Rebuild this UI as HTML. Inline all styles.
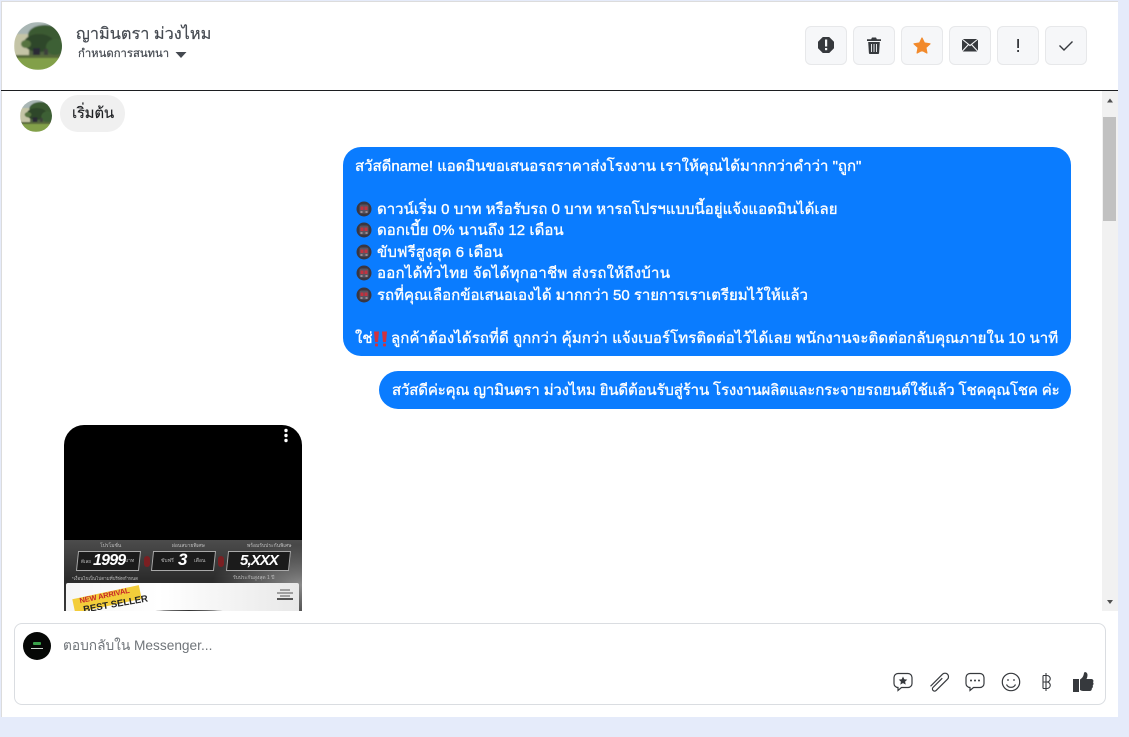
<!DOCTYPE html>
<html lang="th"><head><meta charset="utf-8"><title>Messenger</title>
<style>
*{box-sizing:border-box}
html,body{margin:0;padding:0;width:1129px;height:737px;overflow:hidden;background:#e5ebfa;font-family:"Liberation Sans","Noto Sans CJK SC",sans-serif}
.abs{position:absolute}
#panel{position:absolute;left:1px;top:1px;width:1117px;height:716px;background:#fff;border-top:1px solid #dcdcdc;border-left:1px solid #dcdcdc}
.btn{position:absolute;top:26px;width:42px;height:39px;background:#f6f7f9;border:1px solid #e7e8ea;border-radius:6px}
.btn svg{position:absolute;left:0;top:0}
.t{position:absolute;white-space:nowrap}
.line{position:absolute;left:355px;color:#fff;font-size:15px;line-height:21px;white-space:nowrap;-webkit-text-stroke:.35px #fff}
.emo{position:absolute;left:356px;width:16px;height:16px}
.s{position:absolute;white-space:nowrap;color:#bdbdbd;font-size:5px;line-height:7px}
</style></head><body>
<div id="panel"></div>

<svg width="0" height="0" style="position:absolute"><defs>
<clipPath id="c1"><circle cx="24" cy="24" r="24"/></clipPath>
<filter id="bl"><feGaussianBlur stdDeviation=".7"/></filter>
<symbol id="av" viewBox="0 0 48 48"><g clip-path="url(#c1)"><g filter="url(#bl)">
<rect width="48" height="48" fill="#4f6440"/>
<rect width="48" height="13" fill="#a9b6b4"/>
<rect x="0" y="12" width="15" height="21" fill="#c4c4a6"/>
<ellipse cx="31" cy="13" rx="17" ry="10" fill="#3a5a30"/>
<ellipse cx="25" cy="21" rx="15" ry="9" fill="#2e4729"/>
<ellipse cx="41" cy="25" rx="9" ry="8" fill="#3e6034"/>
<ellipse cx="12" cy="22" rx="5" ry="4" fill="#56733f"/>
<rect x="19" y="26" width="7" height="9" fill="#2a2c34"/>
<rect x="30" y="27" width="4" height="8" fill="#3c3f3a"/>
<rect x="0" y="36" width="48" height="12" fill="#82a04a"/>
<rect x="0" y="33" width="48" height="3" fill="#56693a"/>
</g></g></symbol>
<symbol id="tr" viewBox="0 0 16 16"><circle cx="8" cy="8" r="7.500" fill="#3a3640"/><rect x="3.500" y="3.500" width="9" height="9" rx="2" fill="#585460"/><rect x="4.500" y="5.500" width="3" height="3.500" fill="#c2323f"/><rect x="8.500" y="5.500" width="3" height="3.500" fill="#c2323f"/><rect x="4.500" y="10.500" width="2" height="1" fill="#d9c6c6"/><rect x="9.500" y="10.500" width="2" height="1" fill="#d9c6c6"/></symbol>
</defs></svg>

<svg class="abs" style="left:14px;top:22px" width="48" height="48"><use href="#av"/></svg>
<div class="t" style="left:76px;top:23px;font-size:16.300px;line-height:22px;color:#444950;-webkit-text-stroke:.2px #444950">ญามินตรา ม่วงไหม</div>
<div class="t" style="left:78px;top:46px;font-size:11.300px;line-height:16px;color:#444950;-webkit-text-stroke:.2px #444950">กำหนดการสนทนา</div>
<svg class="abs" style="left:175px;top:51px" width="12" height="8" viewBox="0 0 12 8"><path d="M.5 1h11L6 7z" fill="#444950"/></svg>
<div class="abs" style="left:1px;top:90px;width:1117px;height:1px;background:#1c1e21"></div>

<div class="btn" style="left:805px"><svg width="40" height="37" viewBox="0 0 40 37"><path d="M17 10.500h6l4.500 4.500v6L23 25.500h-6L12.500 21v-6z" fill="#36393d" stroke="#36393d" stroke-linejoin="round"/><rect x="19" y="12.500" width="2.200" height="7" fill="#f6f7f9"/><rect x="19" y="21" width="2.200" height="2.200" fill="#f6f7f9"/></svg></div>
<div class="btn" style="left:853px"><svg width="40" height="37" viewBox="0 0 40 37"><path d="M13 12.200h14v1.800H13zM17 12.500l1-2h4l1 2z" fill="#36393d"/><path d="M14.200 15h11.600l-.7 11a1 1 0 0 1-1 1h-8.200a1 1 0 0 1-1-1z" fill="#36393d"/><path d="M17.500 17v8M20 17v8M22.500 17v8" stroke="#f6f7f9" stroke-width=".9"/></svg></div>
<div class="btn" style="left:901px"><svg width="40" height="37" viewBox="0 0 40 37"><path d="M20 11l2.400 5 5.600.8-4.100 3.800 1 5.400-4.900-2.700-4.900 2.700 1-5.400-4.100-3.800 5.600-.8z" fill="#f28a2c" stroke="#f28a2c" stroke-width="1.200" stroke-linejoin="round"/></svg></div>
<div class="btn" style="left:949px"><svg width="40" height="37" viewBox="0 0 40 37"><rect x="12" y="12" width="16" height="12.500" fill="#36393d"/><path d="M12 12l8 6.500 8-6.500M12 24.500l6.300-6.800M28 24.500l-6.300-6.800" stroke="#f6f7f9" stroke-width="1.100" fill="none"/></svg></div>
<div class="btn" style="left:997px"><svg width="40" height="37" viewBox="0 0 40 37"><rect x="19.200" y="12" width="1.800" height="9" fill="#36393d"/><rect x="19.200" y="23" width="1.800" height="2" fill="#36393d"/></svg></div>
<div class="btn" style="left:1045px"><svg width="40" height="37" viewBox="0 0 40 37"><path d="M13.500 18.500l4.500 4.500 8.500-8.500" stroke="#36393d" stroke-width="1.400" fill="none"/></svg></div>

<svg class="abs" style="left:20px;top:100px" width="32" height="32"><use href="#av"/></svg>
<div class="abs" style="left:60px;top:95px;width:65px;height:37px;background:#f0f0f0;border-radius:18px"></div>
<div class="t" style="left:72px;top:103px;font-size:15px;line-height:21px;color:#1c1e21;letter-spacing:-.25px;-webkit-text-stroke:.15px #1c1e21">เริ่มต้น</div>

<div class="abs" style="left:1102px;top:91px;width:16px;height:520px;background:#f1f1f1"></div>
<div class="abs" style="left:1103px;top:117px;width:13px;height:104px;background:#c1c1c1"></div>
<svg class="abs" style="left:1102px;top:91px" width="16" height="520" viewBox="0 0 16 520"><path d="M5 11.500h6L8 7.500z" fill="#505050"/><path d="M5 509h6l-3 4z" fill="#505050"/></svg>

<div class="abs" style="left:343px;top:147px;width:728px;height:209px;background:#0a7cff;border-radius:18px"></div>
<div class="line" style="top:156px;letter-spacing:-.02px">สวัสดีname! แอดมินขอเสนอรถราคาส่งโรงงาน เราให้คุณได้มากกว่าคำว่า "ถูก"</div>
<svg class="emo" style="top:201px"><use href="#tr"/></svg>
<div class="line" style="left:377px;top:199px;letter-spacing:.01px">ดาวน์เริ่ม 0 บาท หรือรับรถ 0 บาท หารถโปรฯแบบนี้อยู่แจ้งแอดมินได้เลย</div>
<svg class="emo" style="top:222px"><use href="#tr"/></svg>
<div class="line" style="left:377px;top:220px;letter-spacing:.04px">ดอกเบี้ย 0% นานถึง 12 เดือน</div>
<svg class="emo" style="top:244px"><use href="#tr"/></svg>
<div class="line" style="left:377px;top:242px;letter-spacing:.08px">ขับฟรีสูงสุด 6 เดือน</div>
<svg class="emo" style="top:265px"><use href="#tr"/></svg>
<div class="line" style="left:377px;top:263px;letter-spacing:.25px">ออกได้ทั่วไทย จัดได้ทุกอาชีพ ส่งรถให้ถึงบ้าน</div>
<svg class="emo" style="top:287px"><use href="#tr"/></svg>
<div class="line" style="left:377px;top:285px;letter-spacing:-.02px">รถที่คุณเลือกข้อเสนอเองได้ มากกว่า 50 รายการเราเตรียมไว้ให้แล้ว</div>
<div class="line" style="top:328px">ใช่</div>
<svg class="abs" style="left:373px;top:331px" width="15" height="16" viewBox="0 0 15 16"><path d="M1 .5h5L5 11H2zM9 .5h5L13 11h-3z" fill="#d0333f"/><rect x="2" y="12.500" width="3" height="3" rx="1" fill="#d0333f"/><rect x="10" y="12.500" width="3" height="3" rx="1" fill="#d0333f"/></svg>
<div class="line" style="left:391px;top:328px;letter-spacing:.07px">ลูกค้าต้องได้รถที่ดี ถูกกว่า คุ้มกว่า แจ้งเบอร์โทรติดต่อไว้ได้เลย พนักงานจะติดต่อกลับคุณภายใน 10 นาที</div>

<div class="abs" style="left:379px;top:371px;width:692px;height:38px;background:#0a7cff;border-radius:19px"></div>
<div class="line" style="left:392px;top:380px;letter-spacing:-.16px">สวัสดีค่ะคุณ ญามินตรา ม่วงไหม ยินดีต้อนรับสู่ร้าน โรงงานผลิตและกระจายรถยนต์ใช้แล้ว โชคคุณโชค ค่ะ</div>

<div class="abs" style="left:64px;top:425px;width:238px;height:186px;background:#000;border-radius:20px 20px 0 0;overflow:hidden">
  <div class="abs" style="left:0;top:115px;width:238px;height:71px;background:radial-gradient(ellipse 90px 40px at 238px 45px,#8a8a8a,transparent),linear-gradient(180deg,#4c4c4c,#2c2c2c 55%,#3a3a3a)"></div>
  <div class="s" style="left:36px;top:118px">โปรโมชั่น</div>
  <div class="s" style="left:108px;top:118px">ผ่อนสบายพิเศษ</div>
  <div class="s" style="left:183px;top:118px">พร้อมรับประกันพิเศษ</div>
  <div class="abs" style="left:13px;top:126px;width:63px;height:20px;background:#1b1b1b;border:1px solid #a9a9a9;transform:skewX(-6deg)"></div>
  <div class="abs" style="left:88px;top:126px;width:63px;height:20px;background:#1b1b1b;border:1px solid #a9a9a9;transform:skewX(-6deg)"></div>
  <div class="abs" style="left:163px;top:126px;width:63px;height:20px;background:#1b1b1b;border:1px solid #a9a9a9;transform:skewX(-6deg)"></div>
  <div class="s" style="left:17px;top:133px;font-size:4.500px">ดีเลย</div>
  <div class="t" style="left:29px;top:126px;color:#fff;font:italic bold 16px/20px 'Liberation Sans',sans-serif;letter-spacing:-.8px">1999</div>
  <div class="s" style="left:61px;top:133px">บาท</div>
  <div class="s" style="left:97px;top:133px">ขับฟรี</div>
  <div class="t" style="left:114px;top:125px;color:#fff;font:italic bold 17px/20px 'Liberation Sans',sans-serif">3</div>
  <div class="s" style="left:130px;top:133px">เดือน</div>
  <div class="t" style="left:176px;top:126px;color:#fff;font:italic bold 15px/20px 'Liberation Sans',sans-serif;letter-spacing:-.9px">5,XXX</div>
  <div class="abs" style="left:80px;top:131px;width:6px;height:11px;background:#7a1f22;border-radius:3px"></div>
  <div class="abs" style="left:154px;top:131px;width:6px;height:11px;background:#7a1f22;border-radius:3px"></div>
  <div class="s" style="left:8px;top:150px;font-size:4.500px">*เงื่อนไขเป็นไปตามที่บริษัทกำหนด</div>
  <div class="s" style="left:169px;top:150px">รับประกันสูงสุด 1 ปี</div>
  <div class="abs" style="left:2px;top:158px;width:233px;height:30px;background:linear-gradient(90deg,#f6f6f6,#fff 40%,#e8e8e8);border-radius:2px 2px 0 0"></div>
  <div class="abs" style="left:9px;top:167px;width:68px;height:14px;background:#f3cd3a;transform:rotate(-12deg)"></div>
  <div class="t" style="left:15px;top:166px;color:#c8262a;font:bold 7.500px/9px 'Liberation Sans',sans-serif;transform:rotate(-12deg);letter-spacing:-.1px">NEW ARRIVAL</div>
  <div class="t" style="left:19px;top:174px;color:#222;font:bold 9.500px/12px 'Liberation Sans',sans-serif;transform:rotate(-10deg)">BEST SELLER</div>
  <div class="abs" style="left:80px;top:184.500px;width:90px;height:6px;background:#333;border-radius:50% 50% 0 0"></div>
  <svg class="abs" style="left:212px;top:162px" width="18" height="14" viewBox="0 0 18 14" fill="none" stroke="#555"><path d="M4 3h10M1 6h16M4 9h10"/><path d="M1 12h16" stroke="#222" stroke-width="1.500"/></svg>
  <svg class="abs" style="left:218px;top:3px" width="8" height="16" viewBox="0 0 8 16"><circle cx="4" cy="2.500" r="1.700" fill="#fff"/><circle cx="4" cy="7.500" r="1.700" fill="#fff"/><circle cx="4" cy="12.500" r="1.700" fill="#fff"/></svg>
</div>

<div class="abs" style="left:14px;top:623px;width:1092px;height:82px;background:#fff;border:1px solid #dadde1;border-radius:8px"></div>
<svg class="abs" style="left:23px;top:632px" width="28" height="28" viewBox="0 0 28 28"><circle cx="14" cy="14" r="14" fill="#060806"/><rect x="10" y="10" width="8" height="3" rx="1" fill="#3aa24a"/><rect x="8" y="16" width="12" height="1" fill="#cfd8cf"/></svg>
<div class="t" style="left:63px;top:636px;font-size:13.700px;line-height:20px;color:#70757a">ตอบกลับใน Messenger...</div>

<svg class="abs" style="left:890px;top:668px" width="210" height="30" viewBox="0 0 210 30" fill="none" stroke="#36393d" stroke-width="1.200">
<path d="M8 5.500h10a4 4 0 0 1 4 4v6a4 4 0 0 1-4 4h-6.500l-3.500 3v-3a4 4 0 0 1-4-4v-6a4 4 0 0 1 4-4z"/>
<path d="M13 8.500l1.300 2.700 3 .4-2.200 2 .6 3-2.700-1.500-2.700 1.500.6-3-2.200-2 3-.4z" fill="#36393d" stroke="none"/>
<g transform="rotate(45 49 14)"><path d="M46 23V6a3.500 3.500 0 0 1 7 0v16a2.200 2.200 0 0 1-4.400 0V9"/></g>
<path d="M80 5.500h10a4 4 0 0 1 4 4v6a4 4 0 0 1-4 4h-6.500l-3.500 3v-3a4 4 0 0 1-4-4v-6a4 4 0 0 1 4-4z"/>
<circle cx="81" cy="12.500" r="1" fill="#36393d" stroke="none"/><circle cx="85" cy="12.500" r="1" fill="#36393d" stroke="none"/><circle cx="89" cy="12.500" r="1" fill="#36393d" stroke="none"/>
<circle cx="121" cy="14" r="8.700"/><circle cx="118" cy="12" r=".9" fill="#36393d" stroke="none"/><circle cx="124" cy="12" r=".9" fill="#36393d" stroke="none"/><path d="M116.500 16.500a5 5 0 0 0 9 0"/>
<path d="M153 7.500v13M156 5v18M153 7.500h4a3 3 0 0 1 0 6.500h-4M157 14a3.200 3.200 0 0 1 0 6.500h-4" stroke-width="1.100"/>
<path d="M183 11h6v13h-6z" fill="#36393d" stroke="none"/>
<path d="M190 11.500c2.500-1.500 3.500-3.500 4-6.500 .3-1.500 3.500-1 3.500 2 0 1.500-.5 3-1 4h5c1.700 0 2.500 2 1.500 3.300 .8 1 .7 2.400-.3 3.200 .5 1.200 .1 2.300-.9 3 .2 1.500-.8 2.500-2.300 2.500h-6.500c-1 0-2-.4-3-1z" fill="#36393d" stroke="none"/>
</svg>
</body></html>
